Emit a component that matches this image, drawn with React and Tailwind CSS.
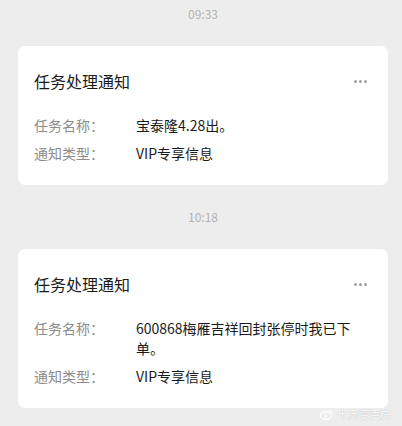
const CARDS = [
  { time: "09:33", name: "宝泰隆4.28出。", type: "VIP专享信息" },
  { time: "10:18", name: "600868梅雁吉祥回封张停时我已下单。", type: "VIP专享信息" },
];

function Card({ time, name, type }) {
  return (
    <div>
      <div className="pt-[6px] pb-6 text-center text-[12px] leading-4 text-[#b3b3b3]">
        {time}
      </div>
      <div className="rounded-[7px] bg-white pl-4 pr-5 pt-[24px] pb-[22px]">
        <div className="flex items-center justify-between">
          <h2 className="text-[16px] leading-[22px] text-[#1b1b1b]">
            任务处理通知
          </h2>
          <div className="flex gap-[2px] mr-[1px]">
            <span className="w-[3px] h-[3px] rounded-full bg-[#a0a0a0]" />
            <span className="w-[3px] h-[3px] rounded-full bg-[#a0a0a0]" />
            <span className="w-[3px] h-[3px] rounded-full bg-[#a0a0a0]" />
          </div>
        </div>
        <div className="mt-[23px] flex flex-col gap-2 text-[14px] leading-5">
          <div className="flex">
            <span className="w-[102px] shrink-0 text-[#8c8c8c]">任务名称：</span>
            <span className="flex-1 text-[#1b1b1b]">{name}</span>
          </div>
          <div className="flex">
            <span className="w-[102px] shrink-0 text-[#8c8c8c]">通知类型：</span>
            <span className="flex-1 text-[#1b1b1b]">{type}</span>
          </div>
        </div>
      </div>
    </div>
  );
}

export default function App() {
  return (
    <div
      className="relative h-[426px] overflow-hidden bg-[#ededed] pl-[18px] pr-[14px]"
      style={{ fontFamily: '"Noto Sans CJK SC", "Noto Sans", sans-serif' }}
    >
      <div className="flex flex-col gap-[18px]">
        {CARDS.map((c) => (
          <Card key={c.time} {...c} />
        ))}
      </div>

      {/* watermark */}
      <div className="absolute right-[10px] bottom-[4px] flex items-center gap-[3px] text-[11px] leading-4 text-white [text-shadow:0_0_1px_#999]">
        <svg width="14" height="12" viewBox="0 0 14 12" fill="none">
          <ellipse cx="6" cy="7.5" rx="5.5" ry="3.8" stroke="#fff" strokeWidth="1.2" />
          <circle cx="5.5" cy="7.8" r="1.4" stroke="#fff" strokeWidth="1" />
          <path d="M9.5 1.5a3 3 0 0 1 3 3" stroke="#fff" strokeWidth="1" />
          <path d="M9.5 3.3a1.3 1.3 0 0 1 1.3 1.3" stroke="#fff" strokeWidth="1" />
        </svg>
        <span>十万变百方</span>
      </div>
    </div>
  );
}
